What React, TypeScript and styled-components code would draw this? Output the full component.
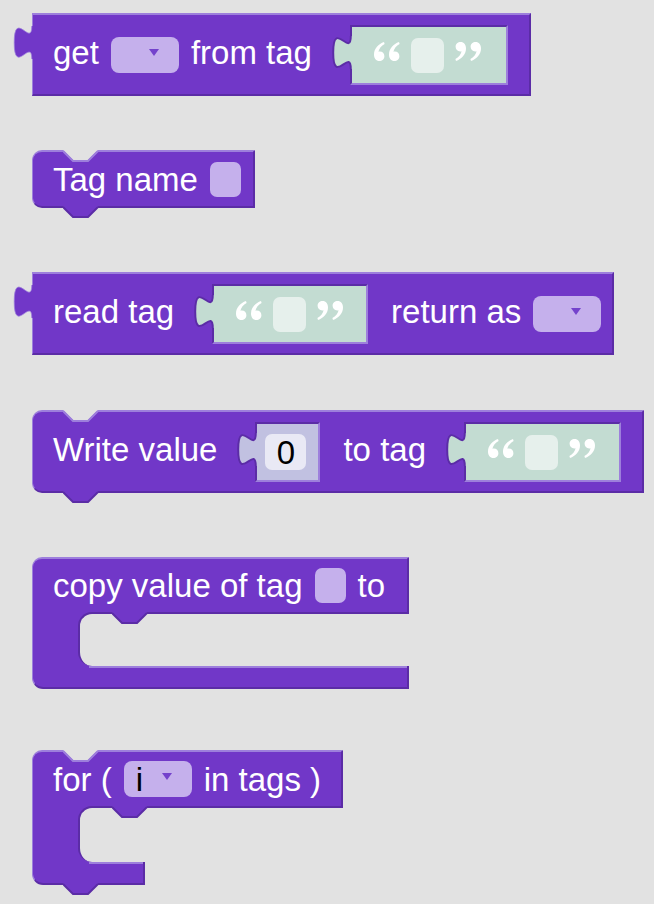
import React from "react"
import styled, { createGlobalStyle } from "styled-components"

const PURPLE = "#7137c8"
const LIGHT = "#9d7fdc"
const DARK = "#5b2ca6"
const BG = "#e2e2e2"
const FIELD = "#c5b0ec"
const ARROW = "#7442cc"
const GREEN = "#c3dcd2"
const GREEN_FIELD = "#e6f0ec"
const NUM = "#c1c1e1"
const NUM_FIELD = "#e9e9f5"

const GlobalStyle = createGlobalStyle`
  html, body {
    margin: 0;
    padding: 0;
    background: ${BG};
  }
  body {
    font-family: "Liberation Sans", Arial, sans-serif;
  }
`

const Workspace = styled.div`
  display: flex;
  flex-direction: column;
  align-items: flex-start;
  box-sizing: border-box;
  min-height: 904px;
  padding: 13px 0 0 12px;
`

const BlockRow = styled.div<{ $mt?: number }>`
  display: flex;
  align-items: flex-start;
  margin-top: ${(p) => p.$mt ?? 0}px;
`

const TabSpace = styled.div`
  flex: none;
  width: 20px;
`

const OutTab = styled.svg<{ $mt: number }>`
  flex: none;
  position: relative;
  z-index: 1;
  margin-top: ${(p) => p.$mt}px;
  margin-right: -2px;
`

const Block = styled.div<{ $round?: boolean; $pr?: number }>`
  position: relative;
  display: flex;
  align-items: center;
  gap: 12px;
  padding: 10px ${(p) => p.$pr ?? 10}px 9px 20px;
  background: ${PURPLE};
  border-top: 2px solid ${LIGHT};
  border-left: 1px solid ${LIGHT};
  border-right: 2px solid ${DARK};
  border-bottom: 2px solid ${DARK};
  border-radius: ${(p) => (p.$round ? "10px 0 0 10px" : "0")};
`

const Label = styled.span<{ $lift?: boolean }>`
  color: #fff;
  font-size: 33px;
  line-height: 33px;
  white-space: pre;
  margin-bottom: ${(p) => (p.$lift ? 6 : 0)}px;
`

const Dropdown = styled.div`
  display: flex;
  align-items: center;
  flex: none;
  box-sizing: border-box;
  width: 68px;
  height: 36px;
  padding: 0 20px 0 12px;
  border-radius: 8px;
  background: ${FIELD};
`

const DropText = styled.span`
  flex: 1;
  color: #000;
  font-size: 33px;
  line-height: 33px;
`

const DropArrow = styled.svg`
  flex: none;
  margin-bottom: 5px;
`

const EmptyField = styled.div`
  flex: none;
  width: 31px;
  height: 35px;
  border-radius: 7px;
  background: ${FIELD};
`

const Slot = styled.div`
  display: flex;
  align-items: flex-start;
  flex: none;
  margin: 0 11px 0 7px;
`

const SlotTab = styled.svg`
  flex: none;
  position: relative;
  z-index: 1;
  margin-top: 10px;
  margin-right: -3px;
`

const SlotBox = styled.div<{ $bg: string; $w: number; $pl: number }>`
  display: flex;
  align-items: center;
  gap: 10px;
  box-sizing: border-box;
  width: ${(p) => p.$w}px;
  height: 60px;
  padding-left: ${(p) => p.$pl}px;
  background: ${(p) => p.$bg};
  border-top: 2px solid ${DARK};
  border-left: 2px solid ${DARK};
  border-right: 2px solid ${LIGHT};
  border-bottom: 2px solid ${LIGHT};
`

const QuoteMark = styled.svg`
  flex: none;
  margin-bottom: 8px;
`

const StringField = styled.div`
  flex: none;
  width: 33px;
  height: 35px;
  border-radius: 7px;
  background: ${GREEN_FIELD};
`

const NumberField = styled.div`
  display: flex;
  align-items: center;
  justify-content: center;
  flex: none;
  width: 41px;
  height: 36px;
  border-radius: 7px;
  background: ${NUM_FIELD};
  color: #000;
  font-size: 33px;
  line-height: 33px;
`

const Notch = styled.svg<{ $top?: boolean }>`
  position: absolute;
  left: 30px;
  ${(p) => (p.$top ? "top: -2px;" : "bottom: -12px;")}
  z-index: 2;
`

const InnerNotch = styled.svg`
  position: absolute;
  top: -2px;
  left: 32px;
`

const CBlock = styled.div`
  display: flex;
  flex-direction: column;
  align-items: stretch;
`

const CHeader = styled.div<{ $pr: number }>`
  position: relative;
  display: flex;
  align-items: center;
  gap: 12px;
  padding: 9px ${(p) => p.$pr}px 9px 20px;
  background: ${PURPLE};
  border-top: 2px solid ${LIGHT};
  border-left: 1px solid ${LIGHT};
  border-right: 2px solid ${DARK};
  border-top-left-radius: 10px;
`

const CMiddle = styled.div<{ $h: number }>`
  display: flex;
  height: ${(p) => p.$h}px;
  padding-left: 45px;
  border-left: 1px solid ${LIGHT};
  background: linear-gradient(90deg, ${PURPLE} 64px, transparent 64px);
`

const Mouth = styled.div`
  position: relative;
  flex: 1;
  box-sizing: border-box;
  background: ${BG};
  border-top: 2px solid ${DARK};
  border-left: 2px solid ${DARK};
  border-radius: 14px 0 0 14px;
`

const CBottom = styled.div<{ $w?: number }>`
  position: relative;
  box-sizing: border-box;
  height: 23px;
  width: ${(p) => (p.$w ? `${p.$w}px` : "auto")};
  align-self: ${(p) => (p.$w ? "flex-start" : "stretch")};
  background: linear-gradient(${LIGHT}, ${LIGHT}) 56px 0 / 100% 2px no-repeat, ${PURPLE};
  border-left: 1px solid ${LIGHT};
  border-right: 2px solid ${DARK};
  border-bottom: 2px solid ${DARK};
  border-bottom-left-radius: 11px;
`

const TAB_FILL = "M1,0 L0,0 C0,10 -8,-8 -8,7.5 C-8,23 0,5 0,15 L1,15 Z"
const TAB_EDGE = "M0,0 C0,10 -8,-8 -8,7.5 C-8,23 0,5 0,15"

function OutputTab({ mt }: { mt: number }) {
  return (
    <OutTab $mt={mt} width="22" height="35.2" viewBox="-9 -0.5 10 16">
      <path d={TAB_FILL} fill={PURPLE} />
      <path d={TAB_EDGE} fill="none" stroke={LIGHT} strokeWidth="0.35" />
    </OutTab>
  )
}

function TopNotch() {
  return (
    <Notch $top width="37" height="13" viewBox="0 0 37 13">
      <path d="M0 0 L10 10 L25 10 L35 0 Z" fill={BG} />
      <path d="M0 1 L10 11 L25 11 L35 1" fill="none" stroke={LIGHT} strokeWidth="2" />
    </Notch>
  )
}

function NotchShape() {
  return (
    <>
      <path d="M0 0 L35 0 L35 1 L25 11 L10 11 L0 1 Z" fill={PURPLE} />
      <path d="M0 1 L10 11 L25 11 L35 1" fill="none" stroke={DARK} strokeWidth="2" />
    </>
  )
}

function BottomNotch() {
  return (
    <Notch width="37" height="12" viewBox="0 0 37 12">
      <NotchShape />
    </Notch>
  )
}

function StatementNotch() {
  return (
    <InnerNotch width="37" height="12" viewBox="0 0 37 12">
      <NotchShape />
    </InnerNotch>
  )
}

function Arrow() {
  return (
    <DropArrow width="10" height="8" viewBox="0 0 10 8">
      <path d="M0 0 H10 L5 7 Z" fill={ARROW} />
    </DropArrow>
  )
}

function Select({ value = "" }: { value?: string }) {
  return (
    <Dropdown>
      <DropText>{value}</DropText>
      <Arrow />
    </Dropdown>
  )
}

// one "6"-shaped quote stroke, round blob at the bottom, tail to the upper right
const MARK =
  "M11,1 C5.5,3 1,7.5 1,13.5 C1,17.5 3.2,20 6.3,20 C9.2,20 11.4,18 11.4,15.2 C11.4,12.6 9.5,10.6 6.8,10.6 C6.3,10.6 5.8,10.7 5.4,10.8 C6.1,7.4 8.3,5 11.6,3 Z"

function Quote({ close }: { close?: boolean }) {
  return (
    <QuoteMark width="28" height="21" viewBox="0 0 28 21">
      <g transform={close ? "rotate(180 14 10.5)" : undefined} fill="#fff">
        <path d={MARK} />
        <path d={MARK} transform="translate(15 0)" />
      </g>
    </QuoteMark>
  )
}

function InputTab({ fill }: { fill: string }) {
  return (
    <SlotTab width="22" height="35.2" viewBox="-9 -0.5 10 16">
      <path d={TAB_FILL} fill={fill} />
      <path d={TAB_EDGE} fill="none" stroke={DARK} strokeWidth="0.9" />
    </SlotTab>
  )
}

function TextSlot({ w = 158 }: { w?: number }) {
  return (
    <Slot>
      <InputTab fill={GREEN} />
      <SlotBox $bg={GREEN} $w={w} $pl={21}>
        <Quote />
        <StringField />
        <Quote close />
      </SlotBox>
    </Slot>
  )
}

function NumberSlot({ value }: { value: string }) {
  return (
    <Slot>
      <InputTab fill={NUM} />
      <SlotBox $bg={NUM} $w={65} $pl={8}>
        <NumberField>{value}</NumberField>
      </SlotBox>
    </Slot>
  )
}

export default function App() {
  return (
    <>
      <GlobalStyle />
      <Workspace>
        <BlockRow>
          <OutputTab mt={12} />
          <Block>
            <Label $lift>get</Label>
            <Select />
            <Label $lift>from tag</Label>
            <TextSlot />
          </Block>
        </BlockRow>

        <BlockRow $mt={54}>
          <TabSpace />
          <Block $round $pr={12}>
            <TopNotch />
            <Label>Tag name</Label>
            <EmptyField />
            <BottomNotch />
          </Block>
        </BlockRow>

        <BlockRow $mt={64}>
          <OutputTab mt={12} />
          <Block $pr={11}>
            <Label $lift>read tag</Label>
            <TextSlot w={156} />
            <Label $lift>return as</Label>
            <Select />
          </Block>
        </BlockRow>

        <BlockRow $mt={55}>
          <TabSpace />
          <Block $round>
            <TopNotch />
            <Label $lift>Write value</Label>
            <NumberSlot value="0" />
            <Label $lift>to tag</Label>
            <TextSlot w={157} />
            <BottomNotch />
          </Block>
        </BlockRow>

        <BlockRow $mt={64}>
          <TabSpace />
          <CBlock>
            <CHeader $pr={22}>
              <Label>copy value of tag</Label>
              <EmptyField />
              <Label>to</Label>
            </CHeader>
            <CMiddle $h={54}>
              <Mouth>
                <StatementNotch />
              </Mouth>
            </CMiddle>
            <CBottom />
          </CBlock>
        </BlockRow>

        <BlockRow $mt={61}>
          <TabSpace />
          <CBlock>
            <CHeader $pr={20}>
              <TopNotch />
              <Label>for (</Label>
              <Select value="i" />
              <Label>in tags )</Label>
            </CHeader>
            <CMiddle $h={56}>
              <Mouth>
                <StatementNotch />
              </Mouth>
            </CMiddle>
            <CBottom $w={113}>
              <BottomNotch />
            </CBottom>
          </CBlock>
        </BlockRow>
      </Workspace>
    </>
  )
}
